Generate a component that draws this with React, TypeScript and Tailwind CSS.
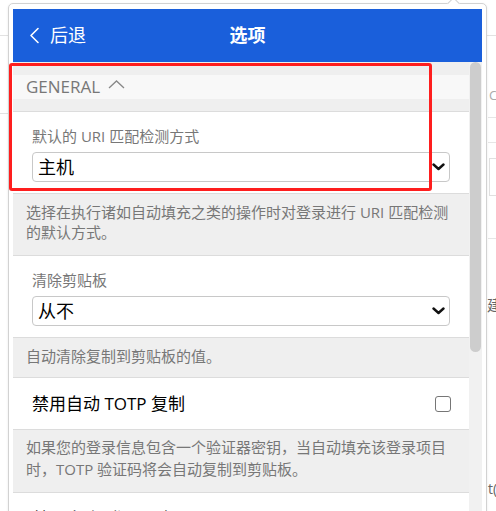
import { ReactNode } from 'react'

function SelectBox({ value }: { value: string }) {
  return (
    <div className="mt-[6px] flex h-[30px] items-center justify-between rounded-[4px] border border-[#c8c8c8] bg-white pl-[5px] pr-[4px]">
      <span className="text-[18px] leading-none text-black">{value}</span>
      <svg width="13" height="8" viewBox="0 0 13 8" fill="none">
        <path d="M1.5 1.5 6.5 6 11.5 1.5" stroke="#111" strokeWidth="2.4" strokeLinecap="round" strokeLinejoin="round" />
      </svg>
    </div>
  )
}

function Help({ children, className = '' }: { children: ReactNode; className?: string }) {
  return (
    <div className={`border-b border-[#dcdcdc] bg-[#efefef] px-[13px] text-[15px] leading-[20px] text-[#777] ${className}`}>
      {children}
    </div>
  )
}

function Checkbox() {
  return <span className="h-[16px] w-[16px] rounded-[3px] border border-[#767676] bg-white" />
}

export default function App() {
  return (
    <div className="relative h-[511px] w-[496px] overflow-hidden bg-white font-['Open_Sans','Noto_Sans_CJK_SC',sans-serif]">
      {/* page behind the popup */}
      <div className="absolute left-0 top-[35px] h-px w-full bg-[#e2e2e2]" />
      <div className="absolute left-0 top-[113px] h-px w-[9px] bg-[#e2e2e2]" />
      <div className="absolute left-[488px] top-[117px] h-px w-[8px] bg-[#e6e6e6]" />
      <div className="absolute left-[488px] top-[142px] h-px w-[8px] bg-[#e6e6e6]" />
      <div className="absolute left-[489px] top-[158px] h-[38px] w-[8px] border-l border-t border-b border-[#e0e0e0]" />
      <div className="absolute left-[488px] top-[238px] h-px w-[8px] bg-[#e6e6e6]" />
      <span className="absolute left-[489px] top-[86px] text-[13px] text-[#aaa]">C</span>
      <span className="absolute left-[487px] top-[294px] text-[15px] text-[#666]">建</span>
      <span className="absolute left-[488px] top-[478px] text-[14px] text-[#666]">t(</span>

      {/* popup */}
      <div className="absolute left-[8px] top-[3px] h-[540px] w-[479px] rounded-[5px] border border-[#d2d2d2] bg-white px-[4px] pt-[5px] shadow-[0_1px_3px_rgba(0,0,0,0.08)]">
        <div className="absolute left-[440px] top-[-5px] h-[9px] w-[9px] rotate-45 border-l border-t border-[#d2d2d2] bg-white" />

        <header className="relative flex h-[53px] items-center justify-center bg-[#1a5fdb] text-white">
          <div className="absolute left-[16px] flex items-center gap-[10px]">
            <svg width="11" height="17" viewBox="0 0 11 17" fill="none">
              <path d="M9 1.5 2 8.5 9 15.5" stroke="white" strokeWidth="1.6" strokeLinecap="round" strokeLinejoin="round" />
            </svg>
            <span className="text-[18px]">后退</span>
          </div>
          <h1 className="text-[18px] font-bold">选项</h1>
        </header>

        <div className="flex">
          <div className="w-[456px]">
            <div className="h-[13px] bg-[#efefef]" />
            <div className="flex h-[24px] items-center gap-[8px] bg-[#f8f8f8] pl-[13px] text-[17px] text-[#777]">
              <span>GENERAL</span>
              <svg width="17" height="9" viewBox="0 0 17 9" fill="none" className="-mt-[6px]">
                <path d="M1 8 8.5 1 16 8" stroke="#888" strokeWidth="1.3" />
              </svg>
            </div>
            <div className="h-[13px] border-b border-[#dcdcdc] bg-[#efefef]" />

            <div className="border-b border-[#dcdcdc] bg-white px-[19px] pb-[11px] pt-[14px]">
              <div className="text-[15px] leading-[20px] text-[#777]">默认的 URI 匹配检测方式</div>
              <SelectBox value="主机" />
            </div>
            <Help className="pb-[13px] pt-[8px]">
              选择在执行诸如自动填充之类的操作时对登录进行 URI 匹配检测的默认方式。
            </Help>

            <div className="border-b border-[#dcdcdc] bg-white px-[19px] pb-[11px] pt-[14px]">
              <div className="text-[15px] leading-[20px] text-[#777]">清除剪贴板</div>
              <SelectBox value="从不" />
            </div>
            <Help className="pb-[11px] pt-[8px]">自动清除复制到剪贴板的值。</Help>

            <div className="flex h-[52px] items-center justify-between border-b border-[#dcdcdc] bg-white pl-[19px] pr-[18px]">
              <span className="text-[17px] text-black">禁用自动 TOTP 复制</span>
              <Checkbox />
            </div>
            <Help className="pb-[12px] pt-[6px] leading-[22px]">
              如果您的登录信息包含一个验证器密钥，当自动填充该登录项目时，TOTP 验证码将会自动复制到剪贴板。
            </Help>

            <div className="flex h-[52px] items-center justify-between bg-white pl-[19px] pr-[18px]">
              <span className="text-[17px] text-black">禁用“添加登录”通知</span>
              <Checkbox />
            </div>
          </div>

          <div className="w-[13px] bg-[#f1f1f1] pl-px pr-px">
            <div className="h-[290px] rounded-full bg-[#cdcdcd]" />
          </div>
        </div>
      </div>

      {/* highlight annotation */}
      <div className="absolute left-[9px] top-[63px] h-[128px] w-[423px] rounded-[3px] border-[3px] border-[#fe1e1e]" />
    </div>
  )
}
